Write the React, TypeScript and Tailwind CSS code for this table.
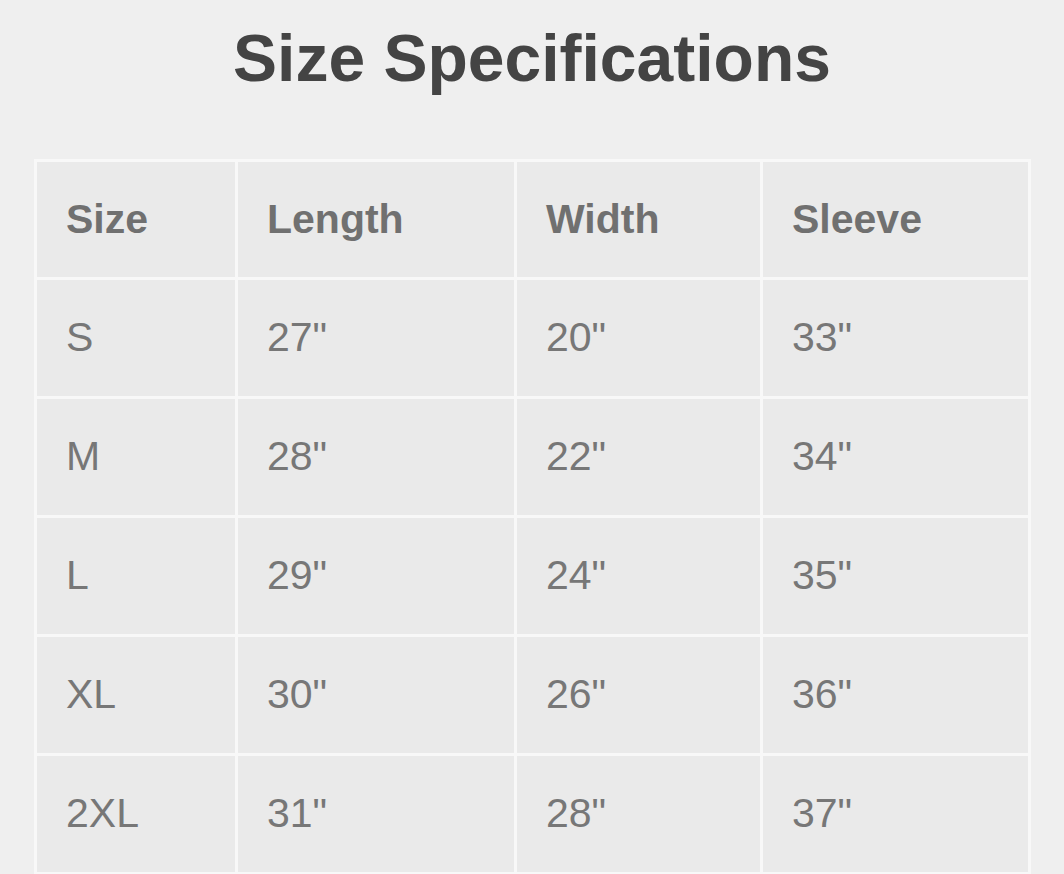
import React from "react";

const header = ["Size", "Length", "Width", "Sleeve"];
const rows = [
  ["S", "27\"", "20\"", "33\""],
  ["M", "28\"", "22\"", "34\""],
  ["L", "29\"", "24\"", "35\""],
  ["XL", "30\"", "26\"", "36\""],
  ["2XL", "31\"", "28\"", "37\""],
];

export default function App() {
  return (
    <div
      className="w-[1064px] h-[874px] overflow-hidden bg-[#efefef]"
      style={{ fontFamily: '"Liberation Sans", Arial, sans-serif' }}
    >
      <div className="pt-[25px] h-[159px] text-center">
        <h1 className="text-[66px] leading-none font-bold text-[#444444]">Size Specifications</h1>
      </div>
      <div className="ml-[34px] w-[997px] bg-[#f8f8f8] p-[3px] grid grid-cols-[198px_276px_243px_265px] gap-[3px]">
        {header.map((h) => (
          <div key={h} className="h-[115px] bg-[#eaeaea] flex items-center pl-[29px] text-[41px] font-bold text-[#707070]">
            {h}
          </div>
        ))}
        {rows.map((r, i) =>
          r.map((c, j) => (
            <div
              key={`${i}-${j}`}
              className="h-[116px] bg-[#eaeaea] flex items-center pl-[29px] text-[41px] text-[#777777]"
            >
              {c}
            </div>
          ))
        )}
      </div>
    </div>
  );
}
